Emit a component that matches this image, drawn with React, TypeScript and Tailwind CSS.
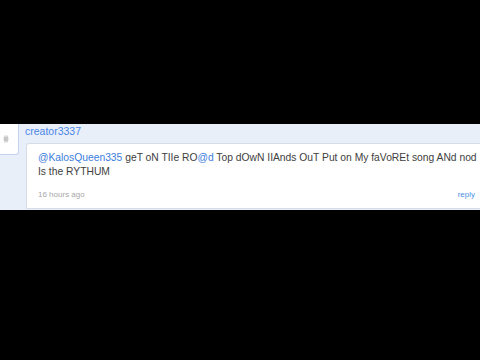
export default function App() {
  return (
    <main className="min-h-[360px] bg-black pt-[124px] font-['Liberation_Sans',Arial,sans-serif]">
      <section className="flex h-[86px] bg-[#e9eff9]">
        <div className="flex h-[31px] w-[19px] shrink-0 items-center rounded-br-[3px] border-r border-b border-[#c3d3ef] bg-white pl-[3px]">
          <svg width="6" height="8" viewBox="0 0 6 8" className="text-[#b5b5b5]">
            <path d="M2 0.5v7M4 0.5v7M0.5 3h5M0.5 5h5" stroke="currentColor" strokeWidth="1" fill="none" />
          </svg>
        </div>
        <div className="flex min-w-0 flex-1 flex-col pl-[6px]">
          <div className="h-[19px] pt-[1px] text-[10.5px] leading-[12px] text-[#4a86e8]">creator3337</div>
          <div className="ml-px flex h-[66px] flex-col overflow-hidden rounded-tl-[3px] border-t border-b border-l border-[#d6dde8] bg-white pt-[7px] pl-[11px] pr-[5px]">
            <div className="whitespace-nowrap text-[10.3px] leading-[14px] text-[#404040]">
              <span className="text-[#3b7ddd]">@KalosQueen335</span> geT oN TIIe RO
              <span className="text-[#3b7ddd]">@d</span> Top dOwN IIAnds OuT Put on My faVoREt song ANd nod
            </div>
            <div className="text-[10.3px] leading-[14px] text-[#404040]">Is the RYTHUM</div>
            <div className="mt-[11px] flex items-center justify-between text-[8px] leading-[10px]">
              <span className="text-[#a8a8a8]">16 hours ago</span>
              <span className="text-[#4a90e8]">reply</span>
            </div>
          </div>
        </div>
      </section>
    </main>
  );
}
